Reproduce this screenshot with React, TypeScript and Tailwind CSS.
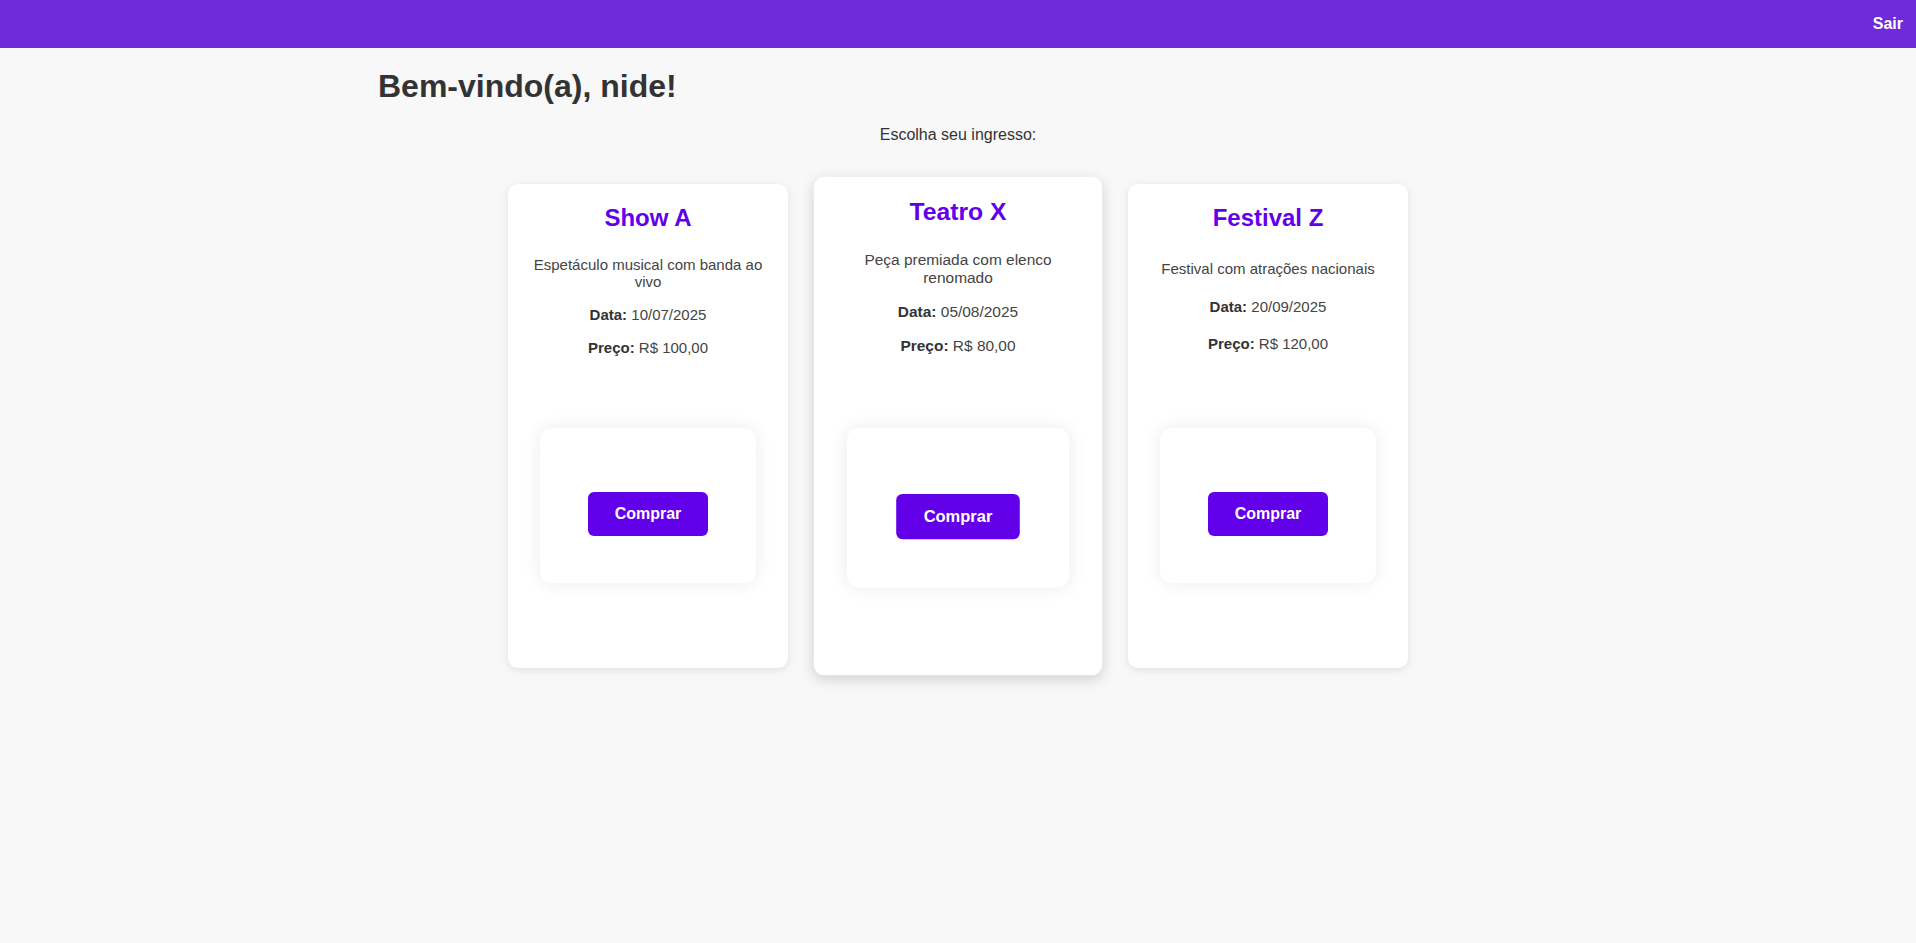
import React from "react";

interface Ticket {
  id: number;
  title: string;
  description: string;
  date: string;
  price: string;
}

const tickets: Ticket[] = [
  {
    id: 1,
    title: "Show A",
    description: "Espetáculo musical com banda ao vivo",
    date: "10/07/2025",
    price: "R$ 100,00",
  },
  {
    id: 2,
    title: "Teatro X",
    description: "Peça premiada com elenco renomado",
    date: "05/08/2025",
    price: "R$ 80,00",
  },
  {
    id: 3,
    title: "Festival Z",
    description: "Festival com atrações nacionais",
    date: "20/09/2025",
    price: "R$ 120,00",
  },
];

const TicketCard: React.FC<{ ticket: Ticket; hovered?: boolean }> = ({
  ticket,
  hovered,
}) => {
  return (
    <div
      className={`w-[280px] bg-white rounded-[10px] p-5 flex flex-col justify-between transition-transform ${
        hovered
          ? "scale-[1.03] shadow-[0_4px_12px_rgba(0,0,0,0.15)]"
          : "shadow-[0_2px_8px_rgba(0,0,0,0.1)]"
      }`}
    >
      <h2 className="text-2xl leading-[28px] font-bold text-[#6200ea] text-center mb-6">
        {ticket.title}
      </h2>
      <p className="text-[15px] leading-[17px] text-center text-[#444] mb-4">
        {ticket.description}
      </p>
      <p className="text-[15px] leading-[17px] text-center text-[#444] mb-4">
        <strong className="text-[#333]">Data:</strong> {ticket.date}
      </p>
      <p className="text-[15px] leading-[17px] text-center text-[#444] mb-[72px]">
        <strong className="text-[#333]">Preço:</strong> {ticket.price}
      </p>
      <div className="mx-3 mb-[65px] h-[155px] rounded-xl bg-white shadow-[0_0_18px_rgba(0,0,0,0.08)] flex justify-center pt-16">
        <button
          type="button"
          className="w-[120px] h-11 rounded-md bg-[#6200ea] text-white font-bold text-base"
        >
          Comprar
        </button>
      </div>
    </div>
  );
};

const App: React.FC = () => {
  return (
    <div className="min-h-screen bg-[#f8f8f8] text-[#333] font-['Liberation_Sans',Arial,sans-serif]">
      <header className="h-12 bg-[#6d2bd9] flex items-center justify-end pr-[13px]">
        <button type="button" className="text-white font-bold text-base">
          Sair
        </button>
      </header>

      <main className="max-w-[1200px] mx-auto px-5 pt-[20px] pb-10">
        <h1 className="text-[32px] leading-[37px] font-bold">
          Bem-vindo(a), nide!
        </h1>
        <p className="mt-[21px] text-center text-base leading-[18px]">
          Escolha seu ingresso:
        </p>

        <div className="mt-10 flex justify-center gap-[30px]">
          {tickets.map((t) => (
            <TicketCard key={t.id} ticket={t} hovered={t.id === 2} />
          ))}
        </div>
      </main>
    </div>
  );
};

export default App;
